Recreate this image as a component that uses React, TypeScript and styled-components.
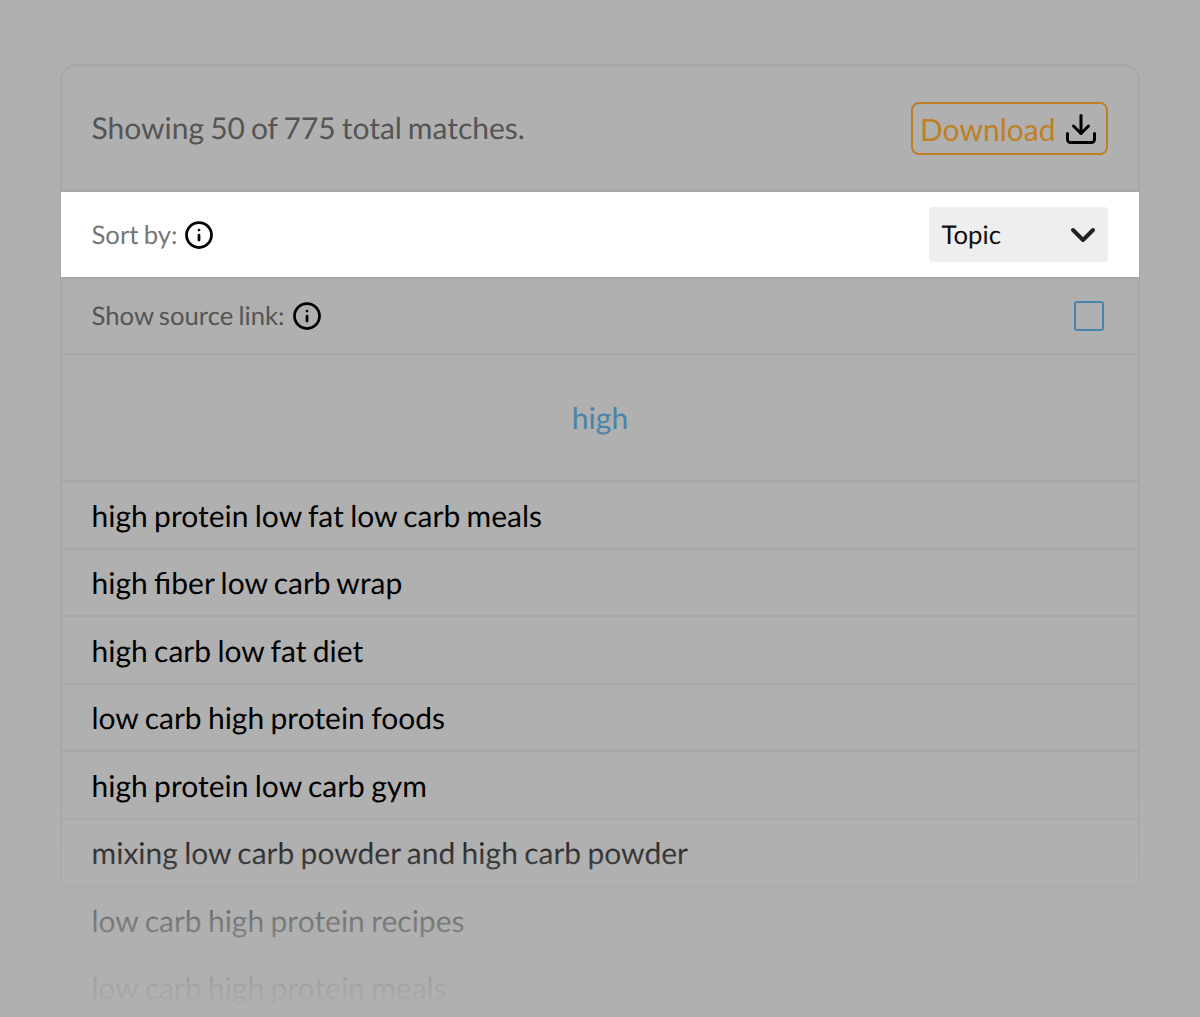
import React from "react";
import styled, { createGlobalStyle } from "styled-components";
import { Download, Info } from "lucide-react";

const Global = createGlobalStyle`
  html, body { margin: 0; padding: 0; height: 1017px; overflow: hidden; background: #b0b0b0; }
  body { font-family: Lato, "Open Sans", sans-serif; text-rendering: geometricPrecision; word-spacing: -1.35px; }
`;

const Page = styled.div`
  position: relative;
  height: 1017px;
  overflow: hidden;
  padding: 64px 60px 0;
  box-sizing: border-box;
  background: #b0b0b0;
`;

const Card = styled.section`
  height: 821px;
  box-sizing: border-box;
  border: 2px solid #a8a8a8;
  border-bottom: 0;
  border-radius: 16px 16px 0 0;
`;

const Header = styled.header`
  height: 125px;
  padding: 0 30px 0 29.5px;
  display: flex;
  align-items: center;
  justify-content: space-between;
  border-bottom: 2px solid #a8a8a8;
  box-sizing: content-box;
  margin-top: -1px;
`;

const Count = styled.p`
  margin: 0;
  font-size: 30px;
  word-spacing: -1.7px;
  color: #555;
`;

const DownloadButton = styled.button`
  width: 197px;
  height: 53px;
  margin-top: 2px;
  padding: 0 7px 0 7px;
  box-sizing: border-box;
  display: flex;
  align-items: center;
  justify-content: space-between;
  background: none;
  border: 2px solid #bf7f24;
  border-radius: 8px;
  color: #bf7f24;
  font: inherit;
  font-size: 30px;
  svg { color: #000; }
`;

const SortRow = styled.div`
  height: 85px;
  margin: 0 -1px;
  padding: 0 31px 0 30.5px;
  display: flex;
  align-items: center;
  justify-content: space-between;
  background: #fff;
`;

const OptionRow = styled.div`
  height: 78px;
  padding: 0 34px 0 29.5px;
  display: flex;
  align-items: center;
  justify-content: space-between;
  border-top: 2px solid #a8a8a8;
  border-bottom: 2px solid #a8a8a8;
  box-sizing: border-box;
`;

const Label = styled.span<{ $light?: boolean }>`
  display: flex;
  align-items: center;
  gap: 7px;
  font-size: 25.7px;
  color: ${(p) => (p.$light ? "#777" : "#555")};
  svg { color: #000; }
`;

const Select = styled.div`
  width: 179px;
  height: 55px;
  padding: 1px 12px 0 12.5px;
  box-sizing: border-box;
  display: flex;
  align-items: center;
  justify-content: space-between;
  background: #eee;
  border-radius: 4px;
  font-size: 25.7px;
  color: #111;
`;

const Chevron = styled.svg`
  margin-top: -1px;
`;

const Checkbox = styled.span`
  width: 30px;
  height: 30px;
  box-sizing: border-box;
  border: 2px solid #4a83ab;
  border-radius: 3px;
`;

const GroupTitle = styled.div`
  height: 125px;
  box-sizing: content-box;
  display: flex;
  align-items: center;
  justify-content: center;
  font-size: 30px;
  color: #4a84ab;
  border-bottom: 2px solid #a8a8a8;
  padding-top: 1px;
  margin-top: -1px;
`;

const List = styled.ul`
  list-style: none;
  margin: 0;
  padding: 0;
`;

const Item = styled.li`
  height: 67.5px;
  box-sizing: border-box;
  padding: 2px 29.5px 0;
  display: flex;
  align-items: center;
  font-size: 30px;
  color: #000;
  border-bottom: 2px solid #a8a8a8;
  &:nth-child(n + 7) { border-bottom-color: transparent; }
`;

const Fade = styled.div`
  position: absolute;
  left: 0;
  right: 0;
  bottom: 0;
  height: 217px;
  background: linear-gradient(
    to bottom,
    rgba(176, 176, 176, 0) 0%,
    rgba(176, 176, 176, 0.29) 24%,
    rgba(176, 176, 176, 0.68) 55%,
    rgba(176, 176, 176, 0.94) 87%,
    rgba(176, 176, 176, 1) 100%
  );
  pointer-events: none;
`;

const items = [
  "high protein low fat low carb meals",
  "high fiber low carb wrap",
  "high carb low fat diet",
  "low carb high protein foods",
  "high protein low carb gym",
  "mixing low carb powder and high carb powder",
  "low carb high protein recipes",
  "low carb high protein meals",
];

export default function App() {
  return (
    <Page>
      <Global />
      <Card>
        <Header>
          <Count>Showing 50 of 775 total matches.</Count>
          <DownloadButton>
            Download
            <Download size={36} strokeWidth={2} />
          </DownloadButton>
        </Header>
        <SortRow>
          <Label $light>
            Sort by:
            <Info size={30} strokeWidth={2.2} />
          </Label>
          <Select>
            Topic
            <Chevron width="26" height="18" viewBox="0 0 26 18" fill="none" stroke="#222" strokeWidth="4" strokeLinecap="round" strokeLinejoin="round">
              <path d="M3 4l10 10L23 4" />
            </Chevron>
          </Select>
        </SortRow>
        <OptionRow>
          <Label>
            Show source link:
            <Info size={30} strokeWidth={2.2} />
          </Label>
          <Checkbox />
        </OptionRow>
        <GroupTitle>high</GroupTitle>
        <List>
          {items.map((t) => (
            <Item key={t}>{t}</Item>
          ))}
        </List>
      </Card>
      <Fade />
    </Page>
  );
}
